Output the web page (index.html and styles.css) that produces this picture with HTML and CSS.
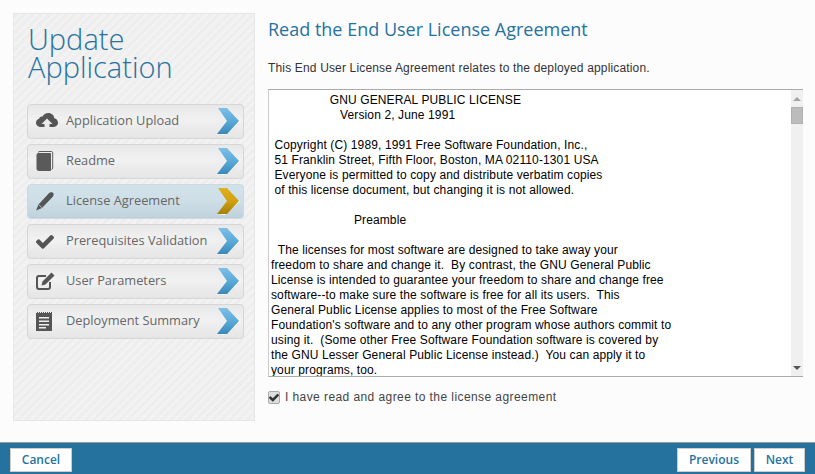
FILE: index.html
```html
<!DOCTYPE html>
<html lang="en">
<head>
<meta charset="utf-8">
<title>Update Application</title>
<link rel="stylesheet" href="styles.css">
</head>
<body>
<div class="content">
  <aside class="sidebar">
    <h1 class="app-title">Update Application</h1>
    <nav class="steps">
      <a class="step">
        <span class="step-icon"><svg width="22" height="16" viewBox="0 0 22 16"><path fill="#555" d="M5 14C2.200 14 0 12.300 0 9.800c0-2 1.300-3.500 3.100-4C3.500 4.200 4.900 3.300 6.500 3.600 7.600 1.400 9.800 0 12.400 0c3.200 0 5.700 2.300 5.900 5.200 2.200.5 3.700 2.300 3.700 4.500 0 2.500-2.200 4.300-5 4.300z"/><path fill="#ececec" d="M11 5.500l5.500 5.500h-3v5h-5v-5h-3z"/></svg></span>
        <span class="step-label">Application Upload</span>
        <svg class="chevron" width="24" height="28" viewBox="0 0 24 28"><defs><linearGradient id="cb" x1="0" y1="0" x2="0" y2="1"><stop offset="0" stop-color="#7cc0e8"/><stop offset=".5" stop-color="#5aaad8"/><stop offset="1" stop-color="#3a88b8"/></linearGradient></defs><path fill="#fff" d="M0 27h8l15-13.500-1-1L8 26z"/><path fill="url(#cb)" d="M1 0h9l12 13-12 13H0l10-13z"/></svg>
      </a>
      <a class="step">
        <span class="step-icon"><svg width="18" height="20" viewBox="0 0 18 20"><path fill="#5a5a5a" d="M2.500 2H14c.6 0 1 .4 1 1v16c0 .6-.4 1-1 1H3c-1.500 0-2.500-1-2.500-2.500V4c0-1.100.9-2 2-2z"/><path fill="none" stroke="#5a5a5a" d="M2 1.500C2.500.8 3 .5 4 .5h11.500c.7 0 1.200.5 1.200 1.200V17c0 .8-.5 1.300-1.200 1.300"/></svg></span>
        <span class="step-label">Readme</span>
        <svg class="chevron" width="24" height="28" viewBox="0 0 24 28"><path fill="#fff" d="M0 27h8l15-13.500-1-1L8 26z"/><path fill="url(#cb)" d="M1 0h9l12 13-12 13H0l10-13z"/></svg>
      </a>
      <a class="step step-active">
        <span class="step-icon"><svg width="18" height="19" viewBox="0 0 18 19"><path fill="#555" d="M0 18.500l2.500-6L12 2.200C13.500.5 15.200 0 16.500.6c1.500.9 1.500 2.700.3 4.100L6 16z"/><path fill="none" stroke="#c9d9e1" stroke-width=".8" d="M3 12.800l3 3"/></svg></span>
        <span class="step-label">License Agreement</span>
        <svg class="chevron" width="24" height="28" viewBox="0 0 24 28"><defs><linearGradient id="cy" x1="0" y1="0" x2="0" y2="1"><stop offset="0" stop-color="#e0b020"/><stop offset=".5" stop-color="#d0a010"/><stop offset="1" stop-color="#a88008"/></linearGradient></defs><path fill="#fff" d="M0 27h8l15-13.500-1-1L8 26z"/><path fill="url(#cy)" d="M1 0h9l12 13-12 13H0l10-13z"/></svg>
      </a>
      <a class="step">
        <span class="step-icon"><svg width="18" height="15" viewBox="128 256 1543 1280"><path fill="#555" d="M1671 566q0 40-28 68l-724 724-136 136q-28 28-68 28t-68-28l-136-136-362-362q-28-28-28-68t28-68l136-136q28-28 68-28t68 28l294 295 656-657q28-28 68-28t68 28l136 136q28 28 28 68z"/></svg></span>
        <span class="step-label">Prerequisites Validation</span>
        <svg class="chevron" width="24" height="28" viewBox="0 0 24 28"><path fill="#fff" d="M0 27h8l15-13.500-1-1L8 26z"/><path fill="url(#cb)" d="M1 0h9l12 13-12 13H0l10-13z"/></svg>
      </a>
      <a class="step">
        <span class="step-icon"><svg width="19" height="18" viewBox="0 0 19 18"><path fill="none" stroke="#555" stroke-width="2" d="M10 4H3C2 4 1 5 1 6v9c0 1 1 2 2 2h9c1 0 2-1 2-2v-5"/><path fill="#555" d="M15.500.5l3 3-9 9-4 1 1-4z"/></svg></span>
        <span class="step-label">User Parameters</span>
        <svg class="chevron" width="24" height="28" viewBox="0 0 24 28"><path fill="#fff" d="M0 27h8l15-13.500-1-1L8 26z"/><path fill="url(#cb)" d="M1 0h9l12 13-12 13H0l10-13z"/></svg>
      </a>
      <a class="step">
        <span class="step-icon"><svg width="16" height="20" viewBox="0 0 16 20"><path fill="#555" fill-rule="evenodd" d="M0 1h16v19H0zM3 6v1.500h10V6zm0 3.500V11h10V9.500zM3 13v1.500h10V13zm0 3v1.500h7V16z"/><path stroke="#eee" stroke-dasharray="1 1" d="M0 1.500h16"/></svg></span>
        <span class="step-label">Deployment Summary</span>
        <svg class="chevron" width="24" height="28" viewBox="0 0 24 28"><path fill="#fff" d="M0 27h8l15-13.500-1-1L8 26z"/><path fill="url(#cb)" d="M1 0h9l12 13-12 13H0l10-13z"/></svg>
      </a>
    </nav>
  </aside>
  <main class="main">
    <h2 class="page-title">Read the End User License Agreement</h2>
    <p class="intro">This End User License Agreement relates to the deployed application.</p>
    <div class="license">
      <pre class="license-text">                 GNU GENERAL PUBLIC LICENSE
                    Version 2, June 1991

 Copyright (C) 1989, 1991 Free Software Foundation, Inc.,
 51 Franklin Street, Fifth Floor, Boston, MA 02110-1301 USA
 Everyone is permitted to copy and distribute verbatim copies
 of this license document, but changing it is not allowed.

                        Preamble

  The licenses for most software are designed to take away your
freedom to share and change it.  By contrast, the GNU General Public
License is intended to guarantee your freedom to share and change free
software--to make sure the software is free for all its users.  This
General Public License applies to most of the Free Software
Foundation's software and to any other program whose authors commit to
using it.  (Some other Free Software Foundation software is covered by
the GNU Lesser General Public License instead.)  You can apply it to
your programs, too.</pre>
      <div class="scrollbar">
        <span class="arrow arrow-up"></span>
        <span class="thumb"></span>
        <span class="track"></span>
        <span class="arrow arrow-down"></span>
      </div>
    </div>
    <label class="agree">
      <span class="checkbox"><svg width="10" height="9" viewBox="128 256 1543 1280"><path fill="#333" d="M1671 566q0 40-28 68l-724 724-136 136q-28 28-68 28t-68-28l-136-136-362-362q-28-28-28-68t28-68l136-136q28-28 68-28t68 28l294 295 656-657q28-28 68-28t68 28l136 136q28 28 28 68z"/></svg></span>
      <span>I have read and agree to the license agreement</span>
    </label>
  </main>
</div>
<footer class="footer">
  <button class="btn">Cancel</button>
  <div class="footer-right">
    <button class="btn btn-prev">Previous</button>
    <button class="btn btn-next">Next</button>
  </div>
</footer>
</body>
</html>
```
FILE: styles.css
```css
* { box-sizing: border-box; }
html, body { margin: 0; height: 100%; }
body {
  display: flex;
  flex-direction: column;
  background: #fcfcfc;
  font-family: "Open Sans", sans-serif;
  overflow: hidden;
}
.content {
  flex: 1;
  display: flex;
  padding: 13px 12px 0 13px;
  gap: 13px;
  min-height: 0;
}
.sidebar {
  width: 242px;
  height: 408px;
  padding: 11px 10px 0 13px;
  border: 1px solid #e6e6e6;
  background: repeating-linear-gradient(135deg, #eeeeee 0, #eeeeee 3px, #f2f2f2 3px, #f2f2f2 6px);
}
.app-title {
  margin: 0 0 23px 1px;
  width: 180px;
  font-size: 29px;
  font-weight: 300;
  line-height: 28px;
  color: #26729f;
}
.steps { display: flex; flex-direction: column; gap: 5px; }
.step {
  display: flex;
  align-items: center;
  height: 35px;
  padding: 0 2px 0 8px;
  border: 1px solid #d6d6d6;
  border-radius: 4px;
  background: linear-gradient(#e8e8e8, #f1f1f1 45%, #e5e5e5);
  color: #666;
  font-size: 12.8px;
}
.step-active {
  background: linear-gradient(#d2e2ea, #cfdfe7 45%, #bfd2dc);
  border-color: #cdd9df;
}
.step-icon { width: 30px; display: flex; align-items: center; padding-bottom: 1px; }
.step-label { flex: 1; padding-bottom: 4px; }
.chevron { flex: none; margin-top: 1px; }
.main { flex: 1; min-width: 0; }
.page-title {
  margin: 3px 0 0;
  font-size: 18px;
  font-weight: 400;
  line-height: 26px;
  color: #26729f;
}
.intro {
  margin: 17px 0 0;
  font: 12px/18px "Liberation Sans", Arial, sans-serif;
  letter-spacing: .16px;
  color: #333;
}
.license {
  display: flex;
  height: 288px;
  margin-top: 12px;
  border-top: 1px solid #aaa;
  border-bottom: 1px solid #aaa;
  border-left: 1px solid #ccc;
  background: #fff;
}
.license-text {
  flex: 1;
  margin: 0;
  padding: 3px 2px;
  font: 12px/15px "Liberation Sans", Arial, sans-serif;
  letter-spacing: .12px;
  color: #000;
  overflow: hidden;
}
.scrollbar {
  width: 12px;
  display: flex;
  flex-direction: column;
  align-items: center;
  background: #f0f0f0;
}
.arrow { width: 0; height: 0; border-left: 4px solid transparent; border-right: 4px solid transparent; }
.arrow-up { margin-top: 7px; border-bottom: 4px solid #a3a3a3; }
.arrow-down { margin-bottom: 6px; border-top: 4px solid #555; }
.thumb { width: 100%; height: 17px; margin-top: 6px; background: #bcbcbc; border: 1px solid #b0b0b0; }
.track { flex: 1; }
.agree {
  display: flex;
  align-items: center;
  gap: 5px;
  margin-top: 11px;
  font: 12px/18px "Liberation Sans", Arial, sans-serif;
  letter-spacing: .42px;
  color: #444;
}
.checkbox {
  width: 12px;
  height: 13px;
  display: flex;
  align-items: center;
  justify-content: center;
  border: 1px solid #aaa;
  border-radius: 2px;
  background: #dedede;
}
.footer {
  display: flex;
  justify-content: space-between;
  align-items: flex-start;
  height: 32px;
  padding: 5px 10px 0;
  border-top: 1px solid #999;
  background: #26729f;
}
.footer-right { display: flex; gap: 3px; }
.btn {
  height: 24px;
  padding: 0;
  border: 1px solid #ccc;
  background: #fff;
  color: #26729f;
  font: 600 12px/20px "Open Sans", sans-serif;
  width: 62px;
}
.btn-prev { width: 74px; }
.btn-next { width: 51px; }
```
